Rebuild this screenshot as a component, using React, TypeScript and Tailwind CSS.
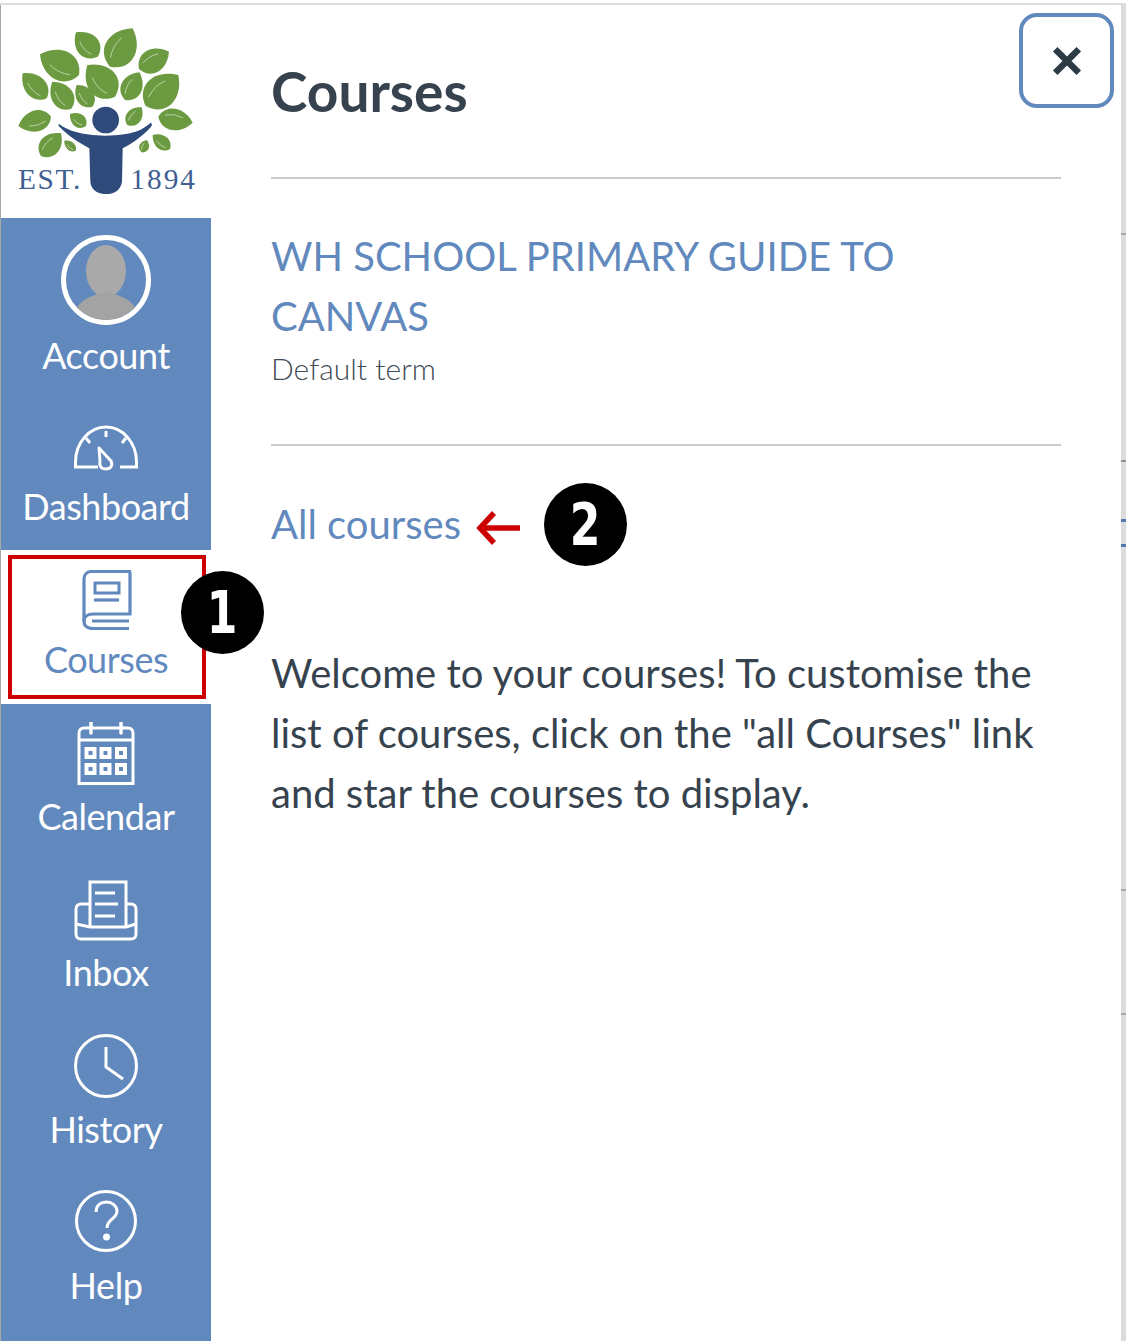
import React from "react";

const leaves: [number, number, number, number, number][] = [
  [228, 97, 293, 170, 0.72],
  [398, 85, 330, 200, 0.7],
  [120, 163, 237, 225, 0.68],
  [507, 155, 417, 207, 0.68],
  [262, 195, 345, 290, 0.72],
  [418, 217, 375, 300, 0.68],
  [535, 225, 437, 318, 0.72],
  [68, 220, 140, 295, 0.62],
  [157, 245, 213, 327, 0.66],
  [230, 255, 277, 320, 0.66],
  [55, 378, 153, 350, 0.62],
  [578, 368, 475, 350, 0.62],
  [210, 342, 258, 378, 0.68],
  [425, 322, 382, 375, 0.68],
  [183, 400, 122, 467, 0.68],
  [193, 422, 227, 452, 0.56],
  [458, 405, 510, 447, 0.62],
  [441, 420, 425, 457, 0.72],
];

function leafPaths(a: [number, number, number, number, number]) {
  const [x1, y1, x2, y2, w] = a;
  const dx = x2 - x1;
  const dy = y2 - y1;
  const k = w / 1.5;
  const nx = -dy * k;
  const ny = dx * k;
  const p = (t: number, s: number) => `${x1 + dx * t + nx * s} ${y1 + dy * t + ny * s}`;
  const body = `M${x1} ${y1}C${p(0.3, 1)} ${p(0.85, 1)} ${x2} ${y2}C${p(0.85, -1)} ${p(0.3, -1)} ${x1} ${y1}Z`;
  const vein = `M${p(0.3, 0.22)}Q${p(0.55, 0.42)} ${p(0.82, 0.2)}`;
  return { body, vein };
}

function Logo() {
  return (
    <svg viewBox="0 0 660 660" className="w-[220px] h-[220px] -ml-px -mt-[5px] block">
      {leaves.map((l, i) => {
        const p = leafPaths(l);
        return (
          <g key={i}>
            <path d={p.body} fill="#6c9a41" />
            <path d={p.vein} fill="none" stroke="#c9dcb4" strokeWidth="2.500" />
          </g>
        );
      })}
      <circle cx="317" cy="360" r="40" fill="#2f4b7c" />
      <path
        d="M177 372C205 392 240 405 317 407C395 405 425 392 452 368C458 372 456 378 450 384C425 410 395 432 368 445L366 545C362 572 340 583 315 582C290 581 272 566 271 545L268 445C240 430 205 408 180 382C175 378 174 374 177 372Z"
        fill="#2f4b7c"
      />
      <text x="54" y="566" fontFamily="'Liberation Serif', serif" fontSize="88" letterSpacing="5" fill="#3f5f92">
        EST.
      </text>
      <text x="391" y="566" fontFamily="'Liberation Serif', serif" fontSize="88" letterSpacing="6" fill="#3f5f92">
        1894
      </text>
    </svg>
  );
}

function Avatar() {
  return (
    <div className="w-[90px] h-[90px] rounded-full border-[5px] border-white overflow-hidden bg-[#6189bd]">
      <svg viewBox="0 0 80 80" className="w-[80px] h-[80px] block">
        <ellipse cx="40" cy="31" rx="20" ry="26" fill="#a9a9a9" />
        <path d="M8 80C8 62 22 56 40 52C58 56 72 62 72 80Z" fill="#a3a3a3" />
      </svg>
    </div>
  );
}

function DashIcon() {
  return (
    <svg width="66" height="46" viewBox="0 0 66 46" fill="none" stroke="#fff" strokeWidth="3">
      <path d="M25 42H2.500V37C2.500 18 16 2 33 2S63.500 18 63.500 37V42H47" />
      <path d="M33 6V12M13 13L17 18M53 13L49 18" />
      <path d="M26 23L38 36C40 40 38 44 33 44S26 41 27 36Z" strokeLinejoin="round" />
    </svg>
  );
}

function BookIcon() {
  return (
    <svg width="50" height="60" viewBox="0 0 50 60" fill="none" stroke="#6189bd" strokeWidth="3.200">
      <path d="M49 1.500H10C5 1.500 2 4.500 2 9V51" />
      <path d="M48 2V44H12C5 44 2 47 2 51C2 56 5 58.500 11 58.500H47" />
      <path d="M10 51H47" />
      <rect x="13" y="13" width="24" height="10" strokeWidth="3" />
      <path d="M12 30H37" />
    </svg>
  );
}

function CalIcon() {
  return (
    <svg width="58" height="64" viewBox="0 0 58 64" fill="none" stroke="#fff" strokeWidth="3">
      <path d="M2 61.500V11C2 8 4 6 7 6H51C54 6 56 8 56 11V61.500Z" />
      <path d="M2 18H56" />
      <path d="M14 1V11M44 1V11" strokeLinecap="round" strokeWidth="3.500" />
      {[9.5, 24.5, 40].map((x) =>
        [27, 43].map((y) => <rect key={`${x}-${y}`} x={x} y={y} width="8" height="8" strokeWidth="4" />)
      )}
    </svg>
  );
}

function InboxIcon() {
  return (
    <svg width="64" height="61" viewBox="0 0 64 61" fill="none" stroke="#fff" strokeWidth="3">
      <path d="M16 46V2H52V46" />
      <path d="M21 13H41M21 24H44M21 36H41" />
      <path d="M16 24H7C4 24 2 26 2 29V54C2 57 4 59 7 59H57C60 59 62 57 62 54V29C62 26 60 24 57 24H52" />
      <path d="M2 44L16 47H52L62 44" />
    </svg>
  );
}

function ClockIcon() {
  return (
    <svg width="64" height="64" viewBox="0 0 64 64" fill="none" stroke="#fff" strokeWidth="3">
      <circle cx="32" cy="32" r="30.500" />
      <path d="M32 13V33L49 45" />
    </svg>
  );
}

function HelpIcon() {
  return (
    <svg width="62" height="62" viewBox="0 0 62 62" fill="none" stroke="#fff" strokeWidth="3">
      <circle cx="31" cy="31" r="29.500" />
      <path d="M21 22C21 15 26 12 31.500 12C37 12 42 16 42 21C42 29 32 29 32 38" />
      <circle cx="31.500" cy="47" r="3.500" fill="#fff" stroke="none" />
    </svg>
  );
}

function Badge({ n, className }: { n: string; className: string }) {
  return (
    <div className={`w-[83px] h-[83px] rounded-full bg-black text-white flex items-center justify-center font-['DejaVu_Sans',sans-serif] font-bold text-[58px] leading-none ${className}`}>
      <span className="inline-block scale-x-[0.76]">{n}</span>
    </div>
  );
}

export default function App() {
  return (
    <div className="relative w-[1126px] h-[1341px] overflow-hidden bg-white font-['Lato',sans-serif] text-[#36434e]">
      <div className="h-[3px] bg-white" />
      <div className="h-[2px] bg-[#dcdcdc]" />
      <div className="flex h-[1336px]">
        <nav className="w-[211px] shrink-0 border-l border-[#a8a8a8] flex flex-col items-stretch text-white text-[36px] leading-[44px] tracking-[-0.45px] text-center">
          <div className="h-[213px] overflow-hidden">
            <Logo />
          </div>
          <div className="bg-[#6189bd] h-[179px] pt-[17px] flex flex-col items-center">
            <Avatar />
            <div className="mt-[8px]">Account</div>
          </div>
          <div className="bg-[#6189bd] h-[153px] pt-[28px] flex flex-col items-center">
            <DashIcon />
            <div className="mt-[13px]">Dashboard</div>
          </div>
          <div className="h-[154px] pt-[5px] pl-[7px]">
            <div className="relative w-[198px] h-[144px] border-[4px] border-[#cc0000] text-[#6189bd] pt-[11px] flex flex-col items-center">
              <BookIcon />
              <div className="mt-[7px] -ml-[2px]">Courses</div>
            </div>
          </div>
          <div className="bg-[#6189bd] h-[156px] pt-[18px] flex flex-col items-center">
            <CalIcon />
            <div className="mt-[8px]">Calendar</div>
          </div>
          <div className="bg-[#6189bd] h-[156px] pt-[20px] flex flex-col items-center">
            <InboxIcon />
            <div className="mt-[9px]">Inbox</div>
          </div>
          <div className="bg-[#6189bd] h-[156px] pt-[18px] flex flex-col items-center">
            <ClockIcon />
            <div className="mt-[9px]">History</div>
          </div>
          <div className="bg-[#6189bd] flex-1 pt-[18px] flex flex-col items-center">
            <HelpIcon />
            <div className="mt-[11px]">Help</div>
          </div>
        </nav>
        <main className="flex-1 pl-[60px] pr-[60px]">
          <h1 className="h-[172px] pt-[51px] text-[55px] leading-[70px] font-bold m-0">Courses</h1>
          <div className="h-[2px] bg-[#c7cdd1]" />
          <div className="pt-[47px] text-[40px] leading-[60px] text-[#6189bd]">
            <div>WH SCHOOL PRIMARY GUIDE TO</div>
            <div>CANVAS</div>
          </div>
          <div className="text-[30px] leading-[44px] font-light text-[#3f4b55]">Default term</div>
          <div className="mt-[54px] h-[2px] bg-[#c7cdd1]" />
          <div className="mt-[37px] flex items-center h-[83px]">
            <span className="text-[40px] leading-[60px] text-[#6189bd] -mt-[2px]">All courses</span>
            <svg width="46" height="36" viewBox="0 0 46 36" fill="none" stroke="#cc0000" strokeWidth="5.500" className="ml-[15px] mt-[6px]">
              <path d="M44 18H4" />
              <path d="M18 3L4 18L18 33" />
            </svg>
            <Badge n="2" className="ml-[22px]" />
          </div>
          <p className="mt-[77px] text-[40px] leading-[60px] m-0">
            Welcome to your courses! To customise the
            <br />
            list of courses, click on the "all Courses" link
            <br />
            and star the courses to display.
          </p>
        </main>
        <div className="w-[5px] shrink-0 bg-[#dcdcdc]" />
      </div>
      <button className="absolute left-[1019px] top-[13px] w-[95px] h-[95px] rounded-[18px] border-[4px] border-[#6189bd] bg-white flex items-center justify-center">
        <svg width="30" height="30" viewBox="0 0 28 28" fill="none" stroke="#2d3b45" strokeWidth="6">
          <path d="M3 3L25 25M25 3L3 25" />
        </svg>
      </button>
      <Badge n="1" className="absolute left-[181px] top-[571px]" />
      <div className="absolute left-[1121px] top-[233px] w-[5px] h-[2px] bg-[#a8a8a8]" />
      <div className="absolute left-[1121px] top-[460px] w-[5px] h-[2px] bg-[#8f8f8f]" />
      <div className="absolute left-[1121px] top-[519px] w-[5px] h-[3px] bg-[#4f7bb0]" />
      <div className="absolute left-[1121px] top-[544px] w-[5px] h-[3px] bg-[#4f7bb0]" />
      <div className="absolute left-[1121px] top-[889px] w-[5px] h-[2px] bg-[#a8a8a8]" />
      <div className="absolute left-[1121px] top-[1013px] w-[5px] h-[2px] bg-[#a8a8a8]" />
    </div>
  );
}
